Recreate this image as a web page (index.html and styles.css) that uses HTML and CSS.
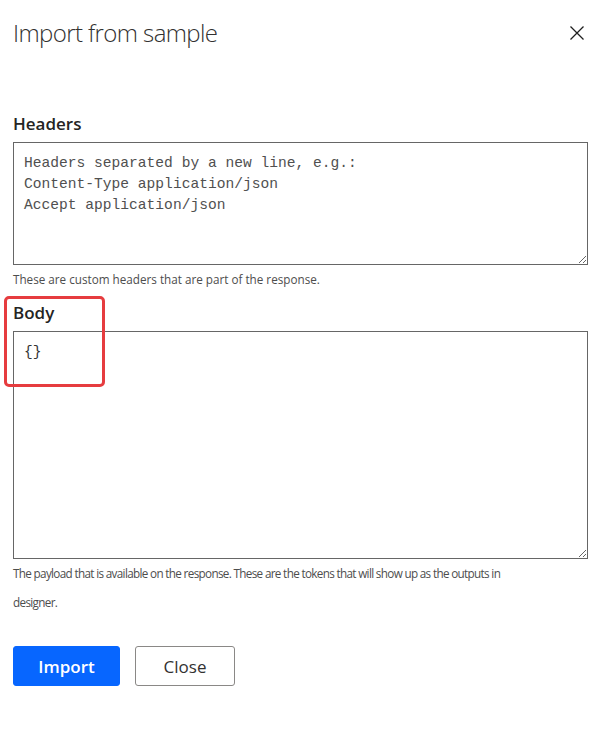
FILE: index.html
```html
<!DOCTYPE html>
<html lang="en">
<head>
<meta charset="utf-8">
<title>Import from sample</title>
<link rel="stylesheet" href="styles.css">
</head>
<body>
<div class="page">
  <div class="header">
    <h1 class="title">Import from sample</h1>
    <button class="close-x" aria-label="Close">
      <svg width="14" height="14" viewBox="0 0 14 14"><path d="M0.5 0.5 L13.5 13.5 M13.5 0.5 L0.5 13.5" stroke="#1f1f1f" stroke-width="1.3" fill="none"/></svg>
    </button>
  </div>

  <div class="field field-headers">
    <label class="label">Headers</label>
    <textarea class="input input-headers" placeholder="Headers separated by a new line, e.g.:
Content-Type application/json
Accept application/json"></textarea>
    <p class="help">These are custom headers that are part of the response.</p>
  </div>

  <div class="field field-body">
    <label class="label">Body</label>
    <textarea class="input input-body">{}</textarea>
    <p class="help help-wide">The payload that is available on the response. These are the tokens that will show up as the outputs in designer.</p>
  </div>

  <div class="actions">
    <button class="btn btn-primary">Import</button>
    <button class="btn btn-default">Close</button>
  </div>

  <div class="annotation"></div>
</div>
</body>
</html>
```

FILE: styles.css
```css
* { box-sizing: border-box; }

html, body {
  margin: 0;
  padding: 0;
  background: #ffffff;
}

body {
  font-family: "Segoe UI", "Open Sans", "Noto Sans", sans-serif;
  color: #323130;
}

.page {
  position: relative;
  width: 601px;
  height: 740px;
  padding: 17px 13px 0 13px;
}

.header {
  display: flex;
  align-items: center;
  justify-content: space-between;
  height: 32px;
}

.title {
  margin: 0;
  font-size: 24px;
  line-height: 32px;
  font-weight: 300;
  letter-spacing: -0.6px;
  color: #323130;
}

.close-x {
  border: 0;
  background: transparent;
  padding: 0;
  margin-right: 4px;
  width: 14px;
  height: 14px;
  display: flex;
}

.field-headers {
  margin-top: 63px;
}

.field-body {
  margin-top: 7px;
}

.label {
  display: block;
  font-size: 17px;
  line-height: 24px;
  font-weight: 600;
  color: #252423;
  margin-bottom: 6px;
}

.input {
  display: block;
  width: 575px;
  margin: 0;
  border: 1px solid #666666;
  border-radius: 0;
  padding: 10px 10px;
  font-family: "Liberation Mono", "DejaVu Sans Mono", monospace;
  font-size: 14.6px;
  line-height: 21px;
  color: #333333;
  background: #ffffff;
  resize: vertical;
  outline: none;
}

.input::placeholder {
  color: #505050;
  opacity: 1;
}

.input-headers {
  height: 123px;
}

.input-body {
  height: 228px;
}

.help {
  margin: 0;
  font-size: 11.7px;
  line-height: 29px;
  color: #4d4d4d;
}

.help-wide {
  max-width: 520px;
  letter-spacing: -0.66px;
}

.actions {
  display: flex;
  gap: 15px;
  margin-top: 29px;
}

.btn {
  height: 40px;
  border-radius: 3px;
  font-family: "Segoe UI", "Open Sans", "Noto Sans", sans-serif;
  font-size: 17px;
  padding: 0;
  cursor: pointer;
}

.btn-primary {
  width: 107px;
  background: #0766ff;
  border: 1px solid #0766ff;
  color: #ffffff;
  font-weight: 600;
}

.btn-default {
  width: 100px;
  background: #ffffff;
  border: 1px solid #8a8886;
  color: #323130;
  font-weight: 400;
}

.annotation {
  position: absolute;
  left: 4px;
  top: 296px;
  width: 101px;
  height: 91px;
  border: 3.5px solid #e63c3f;
  border-radius: 5px;
  pointer-events: none;
}
```
